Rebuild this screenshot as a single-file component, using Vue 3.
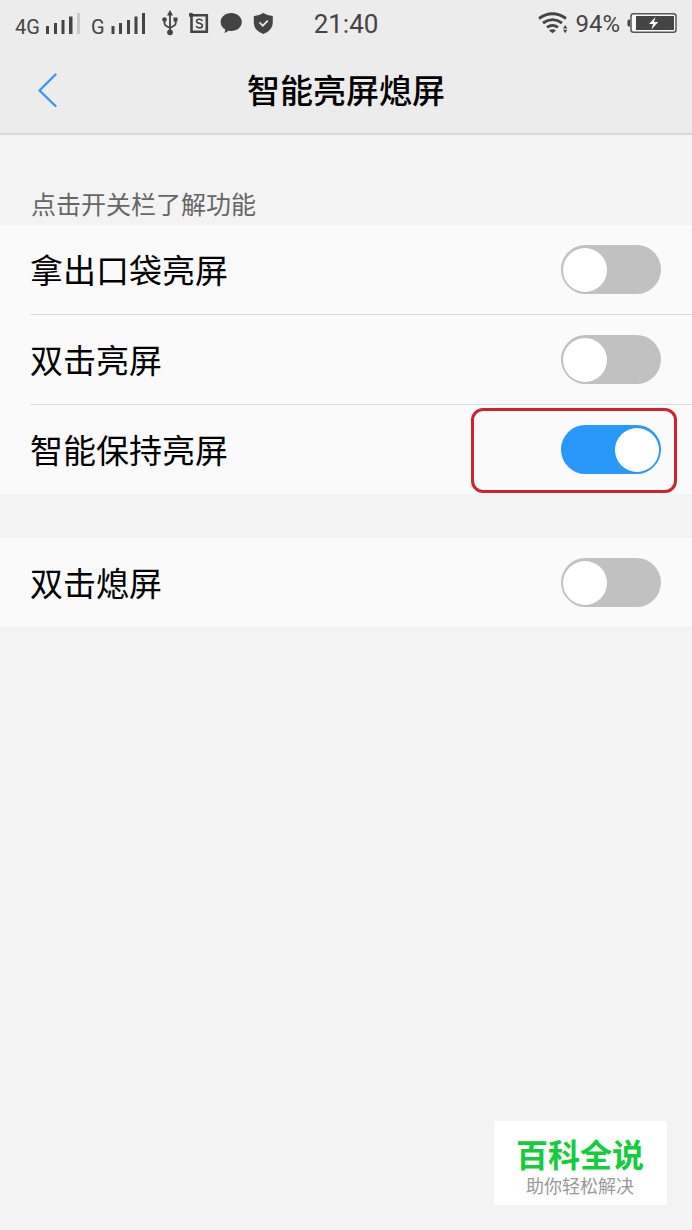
<script setup>
import { ref } from 'vue'

const groups = ref([
  [
    { id: 'pocket', label: '拿出口袋亮屏', on: false },
    { id: 'tap-wake', label: '双击亮屏', on: false },
    { id: 'keep-on', label: '智能保持亮屏', on: true, marked: true },
  ],
  [{ id: 'tap-sleep', label: '双击熄屏', on: false }],
])
</script>

<template>
  <div class="screen">
    <header class="top">
      <div class="status">
        <div class="side">
          <span class="net">4G</span>
          <svg class="bars" width="34" height="48" viewBox="46 0 34 48" aria-hidden="true">
            <path d="M46 26h3v8h-3zM54 23h3v11h-3zM61.5 20h3v14h-3zM69 16.500h3.500v17.500h-3.500z" fill="#444" />
            <path d="M77 13h3v21h-3z" fill="#c9c9c9" />
          </svg>
          <span class="net">G</span>
          <svg class="bars" width="34" height="48" viewBox="111 0 34 48" aria-hidden="true">
            <path d="M111.500 26h3v8h-3zM119 23h3v11h-3zM127 20h3v14h-3zM134.500 16.500h3v17.500h-3zM142 13h3.500v21H142z" fill="#444" />
          </svg>
          <svg class="usb" width="16" height="48" viewBox="163 0 16 48" aria-hidden="true">
            <path d="M171 14v18M165.500 20v3.500q0 1.500 1.500 2.200l4 2.300l4-2.300q1.700-.8 1.700-2.200V20" fill="none" stroke="#444" stroke-width="1.800" />
            <path d="M171 10l3 5.500h-6z" fill="#444" />
            <circle cx="165.500" cy="19.500" r="2.300" fill="#444" />
            <path d="M174.500 17.500h4v4h-4z" fill="#444" />
            <circle cx="171" cy="32.300" r="2.900" fill="#444" />
          </svg>
          <svg class="sbox" width="20" height="48" viewBox="190 0 20 48" aria-hidden="true">
            <path d="M192.500 15.200h15.300v16.600h-15.300z" fill="none" stroke="#444" stroke-width="2.600" />
            <circle cx="192" cy="15" r="2.300" fill="#444" />
            <path d="M203.300 20.800q-.8-1.600-3-1.600q-2.700 0-2.700 2q0 1.600 2.700 2.100q3.100.6 3.100 2.500q0 2.100-3 2.100q-2.600 0-3.300-1.900" fill="none" stroke="#444" stroke-width="1.600" />
          </svg>
          <svg width="22" height="48" viewBox="220 0 22 48" aria-hidden="true">
            <path d="M231.200 13c6 0 10.600 4 10.600 9s-4.600 9-10.600 9q-1.600 0-2.900-.3q-1.700 1.900-4.100 2.100q1.200-1.500 1-3.300q-4.600-2.800-4.600-7.500c0-5 4.600-9 10.600-9z" fill="#444" />
          </svg>
          <svg width="20" height="48" viewBox="253 0 20 48" aria-hidden="true">
            <path d="M263.300 13q4 2.700 9.500 3v6.500q0 8-9.500 11.500q-9.500-3.500-9.500-11.500V16q5.500-.3 9.500-3z" fill="#444" />
            <path d="M259.500 22.500l3.300 3.200l5-5" fill="none" stroke="#ececec" stroke-width="1.700" />
          </svg>
        </div>
        <time class="clock">21:40</time>
        <div class="side right">
          <svg width="30" height="48" viewBox="539 0 30 48" aria-hidden="true">
            <path d="M540 18.500q13.500-9.500 27 0M544 23q9.500-6.700 19 0M548 27.300q5.500-3.700 11 0" fill="none" stroke="#444" stroke-width="2.800" />
            <path d="M550 30.500q3.500-2.400 7 0l-3.500 2.800z" fill="#444" />
            <path d="M564 28.500l2.200-3.500l2.200 3.500zM564 29.800h4.400l-2.200 3.500z" fill="#444" />
          </svg>
          <span class="percent">94%</span>
          <svg width="50" height="48" viewBox="627 0 50 48" aria-hidden="true">
            <path d="M630 19.500h-1q-1.500 0-1.500 1.500v4q0 1.500 1.500 1.500h1z" fill="#444" />
            <rect x="631" y="13.700" width="45" height="18.500" rx="2.500" fill="#f8f8f8" stroke="#555" stroke-width="1.500" />
            <path d="M636 16h38v14h-38z" fill="#444" />
            <path d="M655.500 17l-6.500 7h4l-1.500 5.500l6.700-7.500h-4.200z" fill="#fff" />
          </svg>
        </div>
      </div>
      <div class="bar">
        <button class="back" type="button" aria-label="返回">
          <svg width="20" height="36" viewBox="0 0 20 36" aria-hidden="true">
            <path d="M17.500 1.500L1.500 17.500L17.500 33" fill="none" stroke="#3a96ec" stroke-width="2.400" stroke-linecap="round" stroke-linejoin="round" />
          </svg>
        </button>
        <h1>智能亮屏熄屏</h1>
      </div>
    </header>

    <main>
      <p class="hint">点击开关栏了解功能</p>
      <section v-for="(rows, index) in groups" :key="index" class="group">
        <div v-for="row in rows" :key="row.id" class="row">
          <label :for="row.id">{{ row.label }}</label>
          <input :id="row.id" v-model="row.on" class="switch" type="checkbox" role="switch" />
          <span v-if="row.marked" class="mark"></span>
        </div>
      </section>
    </main>

    <aside class="badge">
      <strong>百科全说</strong>
      <span>助你轻松解决</span>
    </aside>
  </div>
</template>

<style>
body {
  background: #f3f3f3;
}
</style>

<style scoped>
.screen {
  position: relative;
  min-height: 100vh;
  background: #f3f3f3;
  color: #000;
  font-family: "Liberation Sans", "Noto Sans CJK SC", sans-serif;
}

.top {
  background: #ececec;
  border-bottom: 2px solid #d8d8d8;
}

.status {
  display: grid;
  grid-template-columns: 1fr auto 1fr;
  align-items: center;
  height: 48px;
  padding: 0 15px;
  color: #444;
  font-family: Roboto, sans-serif;
}

.side {
  display: flex;
  align-items: center;
}

.side svg {
  flex: none;
  margin-right: 11px;
}

.side .bars {
  margin-left: 6px;
}

.side .usb {
  margin-left: 6px;
}

.net {
  padding-top: 6px;
  font-size: 20px;
  line-height: 24px;
}

.clock {
  font-size: 26px;
  line-height: 48px;
}

.right {
  justify-content: flex-end;
  gap: 7px;
}

.side.right svg {
  margin: 0;
}

.percent {
  font-size: 24px;
  line-height: 48px;
}

.bar {
  display: grid;
  grid-template-columns: 60px 1fr 60px;
  align-items: center;
  height: 85px;
}

.back {
  display: flex;
  justify-content: flex-end;
  padding: 0 2px;
  border: 0;
  background: none;
}

h1 {
  margin: 0;
  padding-top: 2px;
  font-size: 33px;
  font-weight: 500;
  line-height: 48px;
  text-align: center;
}

.hint {
  margin: 0;
  padding: 52px 31px 2px;
  color: #666;
  font-size: 25px;
  line-height: 36px;
}

.group {
  margin-bottom: 44px;
  background: #fafafa;
}

.row {
  position: relative;
  display: flex;
  align-items: center;
  justify-content: space-between;
  height: 89px;
  margin-left: 30px;
  padding-right: 31px;
}

.row + .row {
  border-top: 1px solid #dcdcdc;
}

.row label {
  padding-top: 4px;
  font-size: 33px;
  line-height: 48px;
}

.switch {
  appearance: none;
  display: flex;
  align-items: center;
  width: 100px;
  height: 49px;
  margin: 0;
  padding: 0 2px;
  box-sizing: border-box;
  border-radius: 25px;
  background: #c1c1c1;
}

.switch::before {
  content: "";
  width: 44px;
  height: 44px;
  border-radius: 50%;
  background: #fff;
}

.switch:checked {
  justify-content: flex-end;
  background: #2998fb;
}

.mark {
  position: absolute;
  top: 3px;
  right: 15px;
  width: 206px;
  height: 85px;
  box-sizing: border-box;
  border: 3px solid #cd2530;
  border-radius: 12px;
  pointer-events: none;
}

.badge {
  position: absolute;
  right: 25px;
  bottom: 25px;
  display: flex;
  flex-direction: column;
  align-items: center;
  padding: 17px 23px 6px 22px;
  background: #fff;
}

.badge strong {
  color: #15cc3d;
  font-size: 32px;
  font-weight: 700;
  line-height: 37px;
}

.badge span {
  color: #999;
  font-size: 18px;
  line-height: 24px;
}
</style>
